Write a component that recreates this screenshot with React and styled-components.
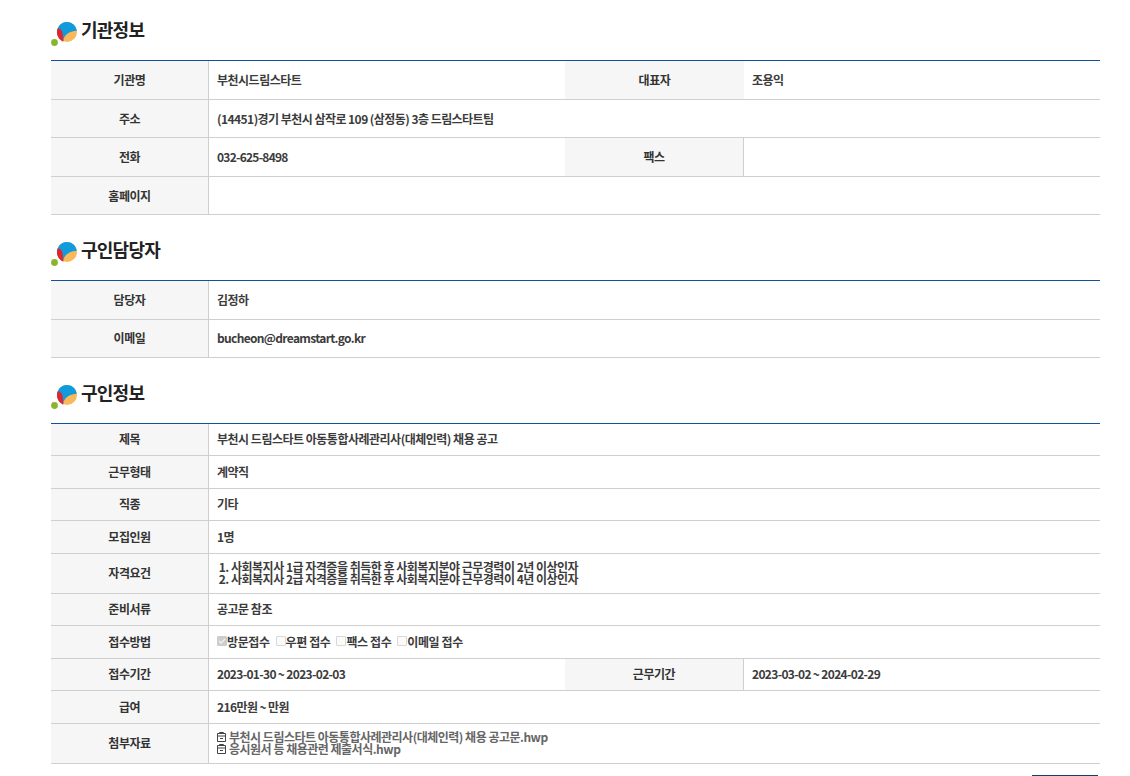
import React from "react";
import styled, { createGlobalStyle } from "styled-components";

const GlobalStyle = createGlobalStyle`
  html, body {
    margin: 0;
    padding: 0;
    background: #fff;
  }
  body {
    font-family: "Noto Sans CJK KR", "Noto Sans", sans-serif;
    color: #333;
  }
`;

const Page = styled.div`
  width: 1049px;
  margin-left: 51px;
  padding-top: 20px;
`;

const Heading = styled.h2`
  display: flex;
  align-items: flex-start;
  gap: 4px;
  height: ${props => props.$height}px;
  margin: 0;
  font-size: 18px;
  font-weight: 700;
  line-height: 18px;
  letter-spacing: -0.75px;
  color: #222;
`;

const LogoWrap = styled.svg`
  margin-top: 2px;
  flex: none;
`;

const Table = styled.table`
  width: 100%;
  margin-bottom: ${props => props.$gap || 0}px;
  border-collapse: separate;
  border-spacing: 0;
  table-layout: fixed;
  border-top: 1px solid #15509a;
`;

const Row = styled.tr`
  height: ${props => props.$h}px;
`;

const Th = styled.th`
  padding: 0 0 ${props => (props.$low ? 0 : 2)}px;
  background: #f6f6f6;
  border-bottom: 1px solid #cfcfcf;
  font-size: 12px;
  font-weight: 700;
  letter-spacing: -0.45px;
  color: #333;
  text-align: center;
`;

const LabelTh = styled(Th)`
  border-right: 1px solid #cfcfcf;
`;

const Td = styled.td`
  padding: 0 8px ${props => (props.$low ? 0 : 2)}px;
  background: #fff;
  border-bottom: 1px solid #cfcfcf;
  font-size: 12px;
  font-weight: 700;
  line-height: 13px;
  letter-spacing: ${props => props.$spacing || -0.5}px;
  color: #3c3c3c;
`;

const QualList = styled.ol`
  margin: 0;
  padding-left: 14px;
  line-height: 12px;
`;

const Method = styled.span`
  display: inline-flex;
  align-items: center;
  margin-right: 6px;
  letter-spacing: -0.4px;
`;

const Box = styled.span`
  display: inline-block;
  width: 10px;
  height: 10px;
  background: ${props => (props.$checked ? "#cdcdcd" : "#fbfbfb")};
  border: 1px solid ${props => (props.$checked ? "#cdcdcd" : "#d8d8d8")};
  border-radius: 1px;
  box-sizing: border-box;
  position: relative;
`;

const FileLine = styled.div`
  display: flex;
  align-items: center;
  gap: 3px;
  color: #666;
  line-height: 12px;
`;

const Footer = styled.div`
  display: flex;
  justify-content: flex-end;
  padding: 11px 2px 0 0;
`;

const ListButton = styled.button`
  width: 66px;
  height: 34px;
  border: 0;
  background: #143f6f;
  color: #fff;
  font: inherit;
  font-size: 13px;
`;

const Logo = () => (
  <LogoWrap width="26" height="24" viewBox="0 0 26 24">
    <circle cx="3.500" cy="20.500" r="3.400" fill="#8cb42c" />
    <circle cx="16" cy="10" r="10" fill="#f9b95a" />
    <path d="M16 0A10 10 0 0 0 8 16L12 19.200C13 13 18 9 25.900 8.700A10 10 0 0 0 16 0z" fill="#0f9bdc" />
    <path d="M6.800 6.500C9.500 6.500 11 8.500 11.500 11L12.500 19.500C9.500 19 6 15 6 10 6 8.800 6.300 7.500 6.800 6.500z" fill="#e1252b" />
  </LogoWrap>
);

const CheckMark = () => (
  <svg width="8" height="8" viewBox="0 0 8 8" style={{ position: "absolute", left: 0, top: 0 }}>
    <path d="M1 4l2 2 4-4" fill="none" stroke="#f2f2f2" strokeWidth="1.300" />
  </svg>
);

const FileIcon = () => (
  <svg width="9" height="10" viewBox="0 0 9 10">
    <path d="M.5 1.500h8v8h-8zM2.500 1.500v-1h4v1M.5 4h8M3 6.500h3" fill="none" stroke="#444" />
  </svg>
);

const Title = ({ height, children }) => (
  <Heading $height={height}>
    <Logo />
    {children}
  </Heading>
);

const ColsFour = () => (
  <colgroup>
    <col width="158" />
    <col width="356" />
    <col width="179" />
    <col width="356" />
  </colgroup>
);

const methods = [
  { label: "방문접수", checked: true },
  { label: "우편 접수" },
  { label: "팩스 접수" },
  { label: "이메일 접수" },
];

const App = () => (
  <>
    <GlobalStyle />
    <Page>
      <Title height={40}>기관정보</Title>
      <Table $gap={25}>
        <ColsFour />
        <tbody>
          <Row $h={39}>
            <LabelTh>기관명</LabelTh>
            <Td>부천시드림스타트</Td>
            <Th>대표자</Th>
            <Td>조용익</Td>
          </Row>
          <Row $h={38}>
            <LabelTh $low>주소</LabelTh>
            <Td $low $spacing={-0.55} colSpan={3}>(14451)경기 부천시 삼작로 109 (삼정동) 3층 드림스타트팀</Td>
          </Row>
          <Row $h={39}>
            <LabelTh>전화</LabelTh>
            <Td $spacing={-0.75}>032-625-8498</Td>
            <LabelTh>팩스</LabelTh>
            <Td></Td>
          </Row>
          <Row $h={38}>
            <LabelTh $low>홈페이지</LabelTh>
            <Td colSpan={3}></Td>
          </Row>
        </tbody>
      </Table>

      <Title height={40}>구인담당자</Title>
      <Table $gap={25}>
        <ColsFour />
        <tbody>
          <Row $h={39}>
            <LabelTh>담당자</LabelTh>
            <Td colSpan={3}>김정하</Td>
          </Row>
          <Row $h={38}>
            <LabelTh>이메일</LabelTh>
            <Td $spacing={-0.67} colSpan={3}>bucheon@dreamstart.go.kr</Td>
          </Row>
        </tbody>
      </Table>

      <Title height={40}>구인정보</Title>
      <Table>
        <ColsFour />
        <tbody>
          <Row $h={32}>
            <LabelTh>제목</LabelTh>
            <Td colSpan={3}>부천시 드림스타트 아동통합사례관리사(대체인력) 채용 공고</Td>
          </Row>
          <Row $h={33}>
            <LabelTh>근무형태</LabelTh>
            <Td colSpan={3}>계약직</Td>
          </Row>
          <Row $h={32}>
            <LabelTh>직종</LabelTh>
            <Td colSpan={3}>기타</Td>
          </Row>
          <Row $h={33}>
            <LabelTh>모집인원</LabelTh>
            <Td colSpan={3}>1명</Td>
          </Row>
          <Row $h={40}>
            <LabelTh>자격요건</LabelTh>
            <Td colSpan={3}>
              <QualList>
                <li>사회복지사 1급 자격증을 취득한 후 사회복지분야 근무경력이 2년 이상인자</li>
                <li>사회복지사 2급 자격증을 취득한 후 사회복지분야 근무경력이 4년 이상인자</li>
              </QualList>
            </Td>
          </Row>
          <Row $h={32}>
            <LabelTh>준비서류</LabelTh>
            <Td colSpan={3}>공고문 참조</Td>
          </Row>
          <Row $h={33}>
            <LabelTh>접수방법</LabelTh>
            <Td colSpan={3}>
              {methods.map(m => (
                <Method key={m.label}>
                  <Box $checked={m.checked}>{m.checked ? <CheckMark /> : null}</Box>
                  {m.label}
                </Method>
              ))}
            </Td>
          </Row>
          <Row $h={32}>
            <LabelTh>접수기간</LabelTh>
            <Td $spacing={-0.67}>2023-01-30 ~ 2023-02-03</Td>
            <LabelTh>근무기간</LabelTh>
            <Td $spacing={-0.67}>2023-03-02 ~ 2024-02-29</Td>
          </Row>
          <Row $h={33}>
            <LabelTh>급여</LabelTh>
            <Td $spacing={-0.6} colSpan={3}>216만원 ~ 만원</Td>
          </Row>
          <Row $h={40}>
            <LabelTh>첨부자료</LabelTh>
            <Td colSpan={3}>
              <FileLine><FileIcon />부천시 드림스타트 아동통합사례관리사(대체인력) 채용 공고문.hwp</FileLine>
              <FileLine><FileIcon />응시원서 등 채용관련 제출서식.hwp</FileLine>
            </Td>
          </Row>
        </tbody>
      </Table>
      <Footer>
        <ListButton>목록</ListButton>
      </Footer>
    </Page>
  </>
);

export default App;
